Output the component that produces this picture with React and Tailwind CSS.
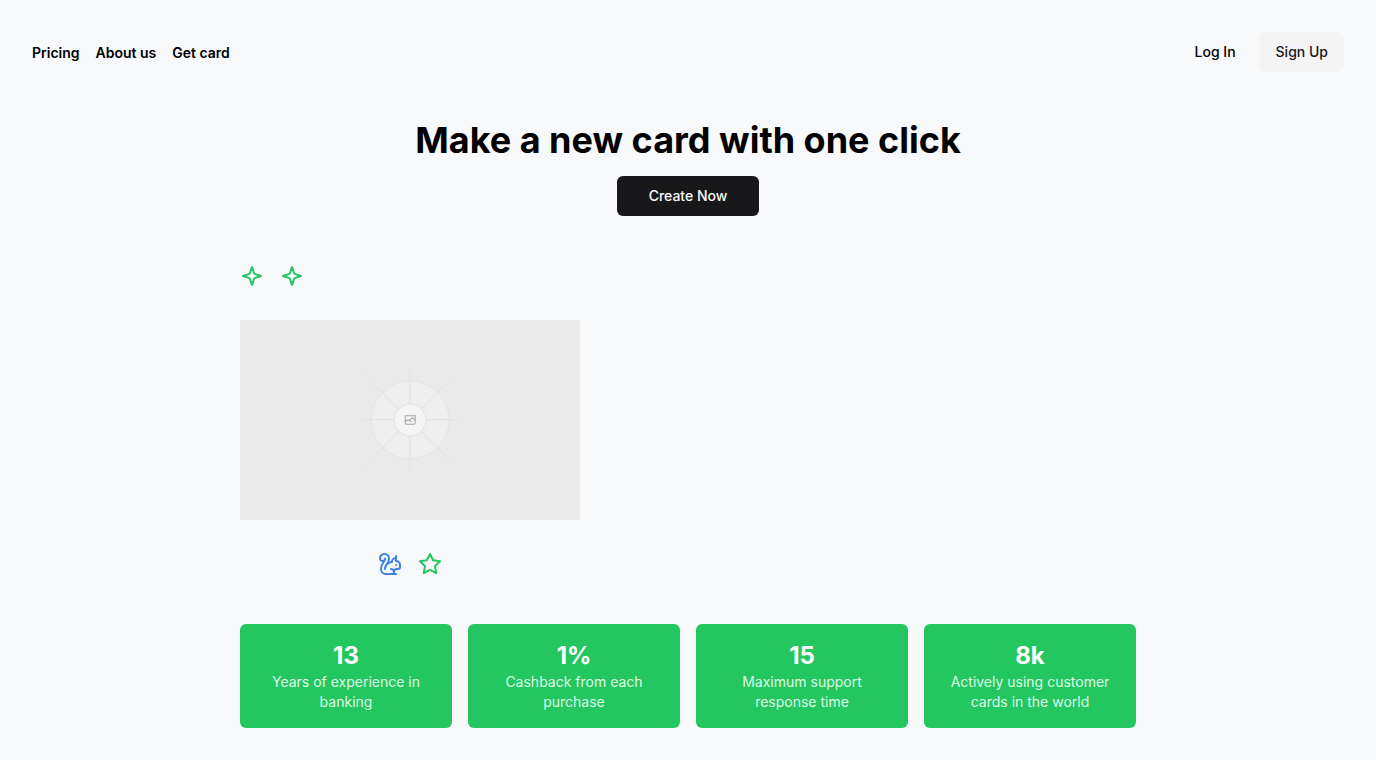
import { Squirrel } from "lucide-react";

const links = ["Pricing", "About us", "Get card"];

const stats = [
  { value: "13", label: "Years of experience in banking" },
  { value: "1%", label: "Cashback from each purchase" },
  { value: "15", label: "Maximum support response time" },
  { value: "8k", label: "Actively using customer cards in the world" },
];

function OutlineIcon({ children }) {
  return (
    <svg
      viewBox="0 0 24 24"
      fill="none"
      stroke="currentColor"
      strokeWidth="2"
      strokeLinecap="round"
      strokeLinejoin="round"
      className="size-6 text-[#22c55e]"
      aria-hidden="true"
    >
      {children}
    </svg>
  );
}

function Sparkle() {
  return (
    <OutlineIcon>
      <path d="m12 3-1.9 5.8a2 2 0 0 1-1.287 1.288L3 12l5.8 1.9a2 2 0 0 1 1.288 1.287L12 21l1.9-5.8a2 2 0 0 1 1.287-1.288L21 12l-5.8-1.9a2 2 0 0 1-1.288-1.287Z" />
    </OutlineIcon>
  );
}

function Star() {
  return (
    <OutlineIcon>
      <polygon points="12 2 15.09 8.26 22 9.27 17 14.14 18.18 21.02 12 17.77 5.82 21.02 7 14.14 2 9.27 8.91 8.26 12 2" />
    </OutlineIcon>
  );
}

function Fade({ id, x1, y1, x2, y2 }) {
  return (
    <linearGradient id={id} x1={x1} y1={y1} x2={x2} y2={y2} gradientUnits="userSpaceOnUse">
      <stop stopColor="#C9C9C9" stopOpacity="0" />
      <stop offset=".208" stopColor="#C9C9C9" />
      <stop offset=".792" stopColor="#C9C9C9" />
      <stop offset="1" stopColor="#C9C9C9" stopOpacity="0" />
    </linearGradient>
  );
}

function CardPlaceholder() {
  return (
    <svg
      viewBox="0 0 1200 1200"
      preserveAspectRatio="xMidYMid slice"
      fill="none"
      role="img"
      aria-label="Card"
      className="h-[200px] w-full bg-[#eaeaea]"
    >
      <defs>
        <Fade id="fade-rise" x1="420" y1="780" x2="780" y2="420" />
        <Fade id="fade-across" x1="404" y1="598" x2="796" y2="599" />
        <Fade id="fade-up" x1="599" y1="796" x2="600" y2="404" />
        <Fade id="fade-fall" x1="420" y1="420" x2="780" y2="780" />
      </defs>
      <g opacity=".5">
        <g opacity=".5">
          <circle cx="600.7" cy="599.9" r="136.6" fill="#FAFAFA" />
          <circle cx="600.7" cy="599.9" r="137.8" stroke="#C9C9C9" strokeWidth="2.418" />
        </g>
        <g strokeWidth="2.418">
          <path stroke="url(#fade-rise)" d="M404.3 796.6 795.7 405.2" />
          <path stroke="url(#fade-across)" d="M404.846 598.671h391.726" />
          <path stroke="url(#fade-up)" d="M599.5 795.742V404.017" />
          <path stroke="url(#fade-fall)" d="m795.717 796.597-391.441-391.44" />
        </g>
        <circle cx="600.7" cy="600" r="56.7" fill="#fff" />
        <path
          fill="#666"
          fillRule="evenodd"
          clipRule="evenodd"
          d="M616.426 586.58h-31.434v16.176l3.553-3.554.531-.531h9.068l.074-.074 8.463-8.463h2.565l7.18 7.181V586.58Zm-15.715 14.654 3.698 3.699 1.283 1.282-2.565 2.565-1.282-1.283-5.2-5.199h-6.066l-5.514 5.514-.073.073v2.876a2.418 2.418 0 0 0 2.418 2.418h26.598a2.418 2.418 0 0 0 2.418-2.418v-8.317l-8.463-8.463-7.181 7.181-.071.072Zm-19.347 5.442v4.085a6.045 6.045 0 0 0 6.046 6.045h26.598a6.044 6.044 0 0 0 6.045-6.045v-7.108l1.356-1.355-1.282-1.283-.074-.073v-17.989h-38.689v23.43l-.146.146.146.147Z"
        />
        <circle cx="600.7" cy="600" r="56.7" stroke="#C9C9C9" strokeWidth="2.418" />
      </g>
    </svg>
  );
}

export default function App() {
  return (
    <div className="min-h-screen bg-[#f7f9fb] p-8 font-['Inter',sans-serif] text-black">
      <header className="flex items-center justify-between">
        <nav>
          <ul className="flex gap-4">
            {links.map((link) => (
              <li key={link}>
                <a href="#" className="text-sm font-semibold">
                  {link}
                </a>
              </li>
            ))}
          </ul>
        </nav>
        <div className="flex gap-2 text-sm font-medium">
          <button type="button" className="h-10 rounded-md px-4">
            Log In
          </button>
          <button type="button" className="h-10 rounded-md bg-[#f4f4f4] px-4 text-zinc-900">
            Sign Up
          </button>
        </div>
      </header>

      <main className="mx-auto mt-12 max-w-4xl">
        <div className="flex flex-col items-center gap-4">
          <h1 className="text-center text-4xl font-bold">Make a new card with one click</h1>
          <button
            type="button"
            className="h-10 rounded-md bg-zinc-900 px-8 text-sm font-medium text-zinc-50"
          >
            Create Now
          </button>
        </div>

        <section className="mt-12 flex w-full max-w-[340px] flex-col gap-8">
          <div className="flex gap-4">
            <Sparkle />
            <Sparkle />
          </div>
          <CardPlaceholder />
          <div className="flex justify-center gap-4">
            <Squirrel className="size-6 text-[#3b82e6]" aria-hidden="true" />
            <Star />
          </div>
        </section>

        <section className="mt-12 grid grid-cols-2 gap-4 text-center text-white md:grid-cols-4">
          {stats.map(({ value, label }) => (
            <div key={value} className="rounded-md bg-[#24c65f] p-4">
              <p className="text-2xl font-bold">{value}</p>
              <p className="px-2 text-sm text-green-100">{label}</p>
            </div>
          ))}
        </section>
      </main>
    </div>
  );
}
